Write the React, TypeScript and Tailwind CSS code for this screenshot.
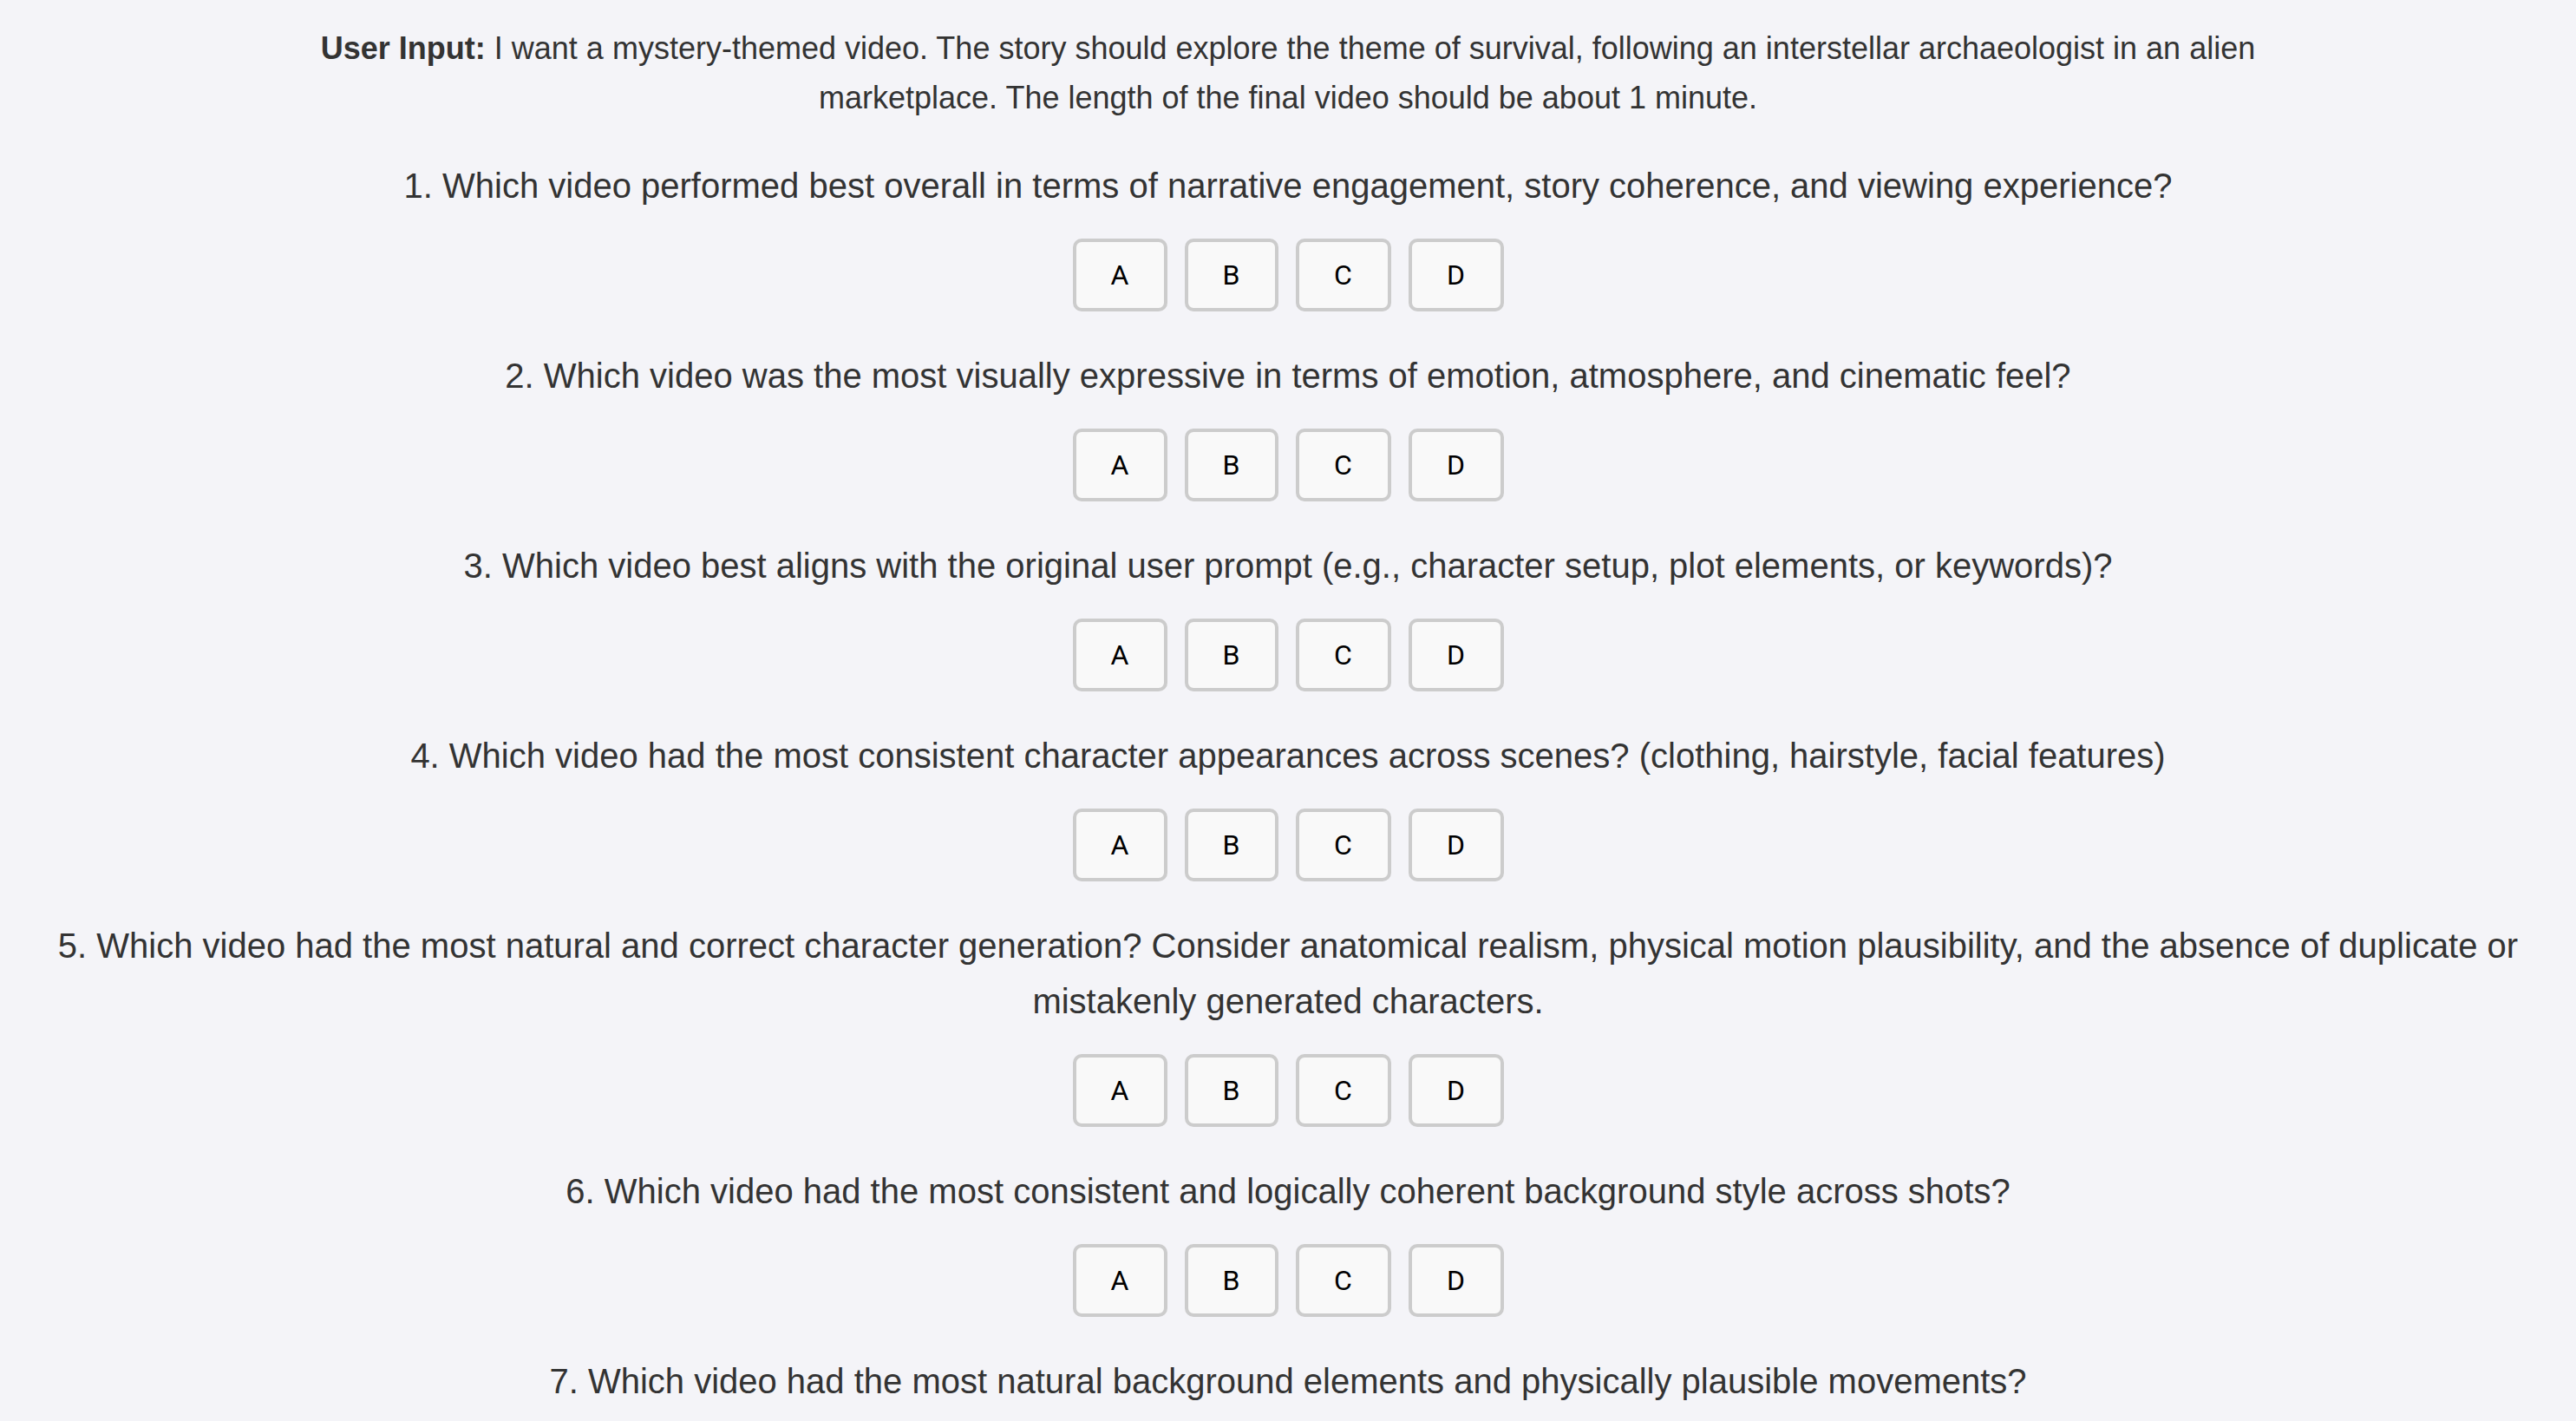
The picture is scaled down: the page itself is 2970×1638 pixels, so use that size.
import React from "react";

const questions: string[] = [
  "1. Which video performed best overall in terms of narrative engagement, story coherence, and viewing experience?",
  "2. Which video was the most visually expressive in terms of emotion, atmosphere, and cinematic feel?",
  "3. Which video best aligns with the original user prompt (e.g., character setup, plot elements, or keywords)?",
  "4. Which video had the most consistent character appearances across scenes? (clothing, hairstyle, facial features)",
  "5. Which video had the most natural and correct character generation? Consider anatomical realism, physical motion plausibility, and the absence of duplicate or mistakenly generated characters.",
  "6. Which video had the most consistent and logically coherent background style across shots?",
  "7. Which video had the most natural background elements and physically plausible movements?",
];

const options = [
  { label: "A", w: "w-[109px]" },
  { label: "B", w: "w-[108px]" },
  { label: "C", w: "w-[110px]" },
  { label: "D", w: "w-[110px]" },
];

function Options() {
  return (
    <div className="flex justify-center gap-[20px] mt-[29px] mb-[42px]">
      {options.map((o) => (
        <button
          key={o.label}
          className={`${o.w} h-[84px] border-[4px] border-[#cccccc] rounded-[10px] bg-[#f9f9f9] text-black text-[32px] font-['Roboto',sans-serif] flex items-center justify-center`}
        >
          {o.label}
        </button>
      ))}
    </div>
  );
}

export default function App() {
  return (
    <div className="min-h-screen bg-[#f4f4f8] text-[#333333] font-['Liberation_Sans',Arial,sans-serif] px-[30px] pt-[27px]">
      <p className="mx-auto max-w-[2300px] text-center text-[36px] leading-[57px]">
        <strong className="font-bold">User Input:</strong> I want a mystery-themed video. The story should explore the theme of survival, following an interstellar archaeologist in an alien marketplace. The length of the final video should be about 1 minute.
      </p>
      <div className="mt-[41px]">
        {questions.map((q, i) => (
          <div key={i}>
            <p className="text-center text-[40px] leading-[64px]">{q}</p>
            <Options />
          </div>
        ))}
      </div>
    </div>
  );
}
